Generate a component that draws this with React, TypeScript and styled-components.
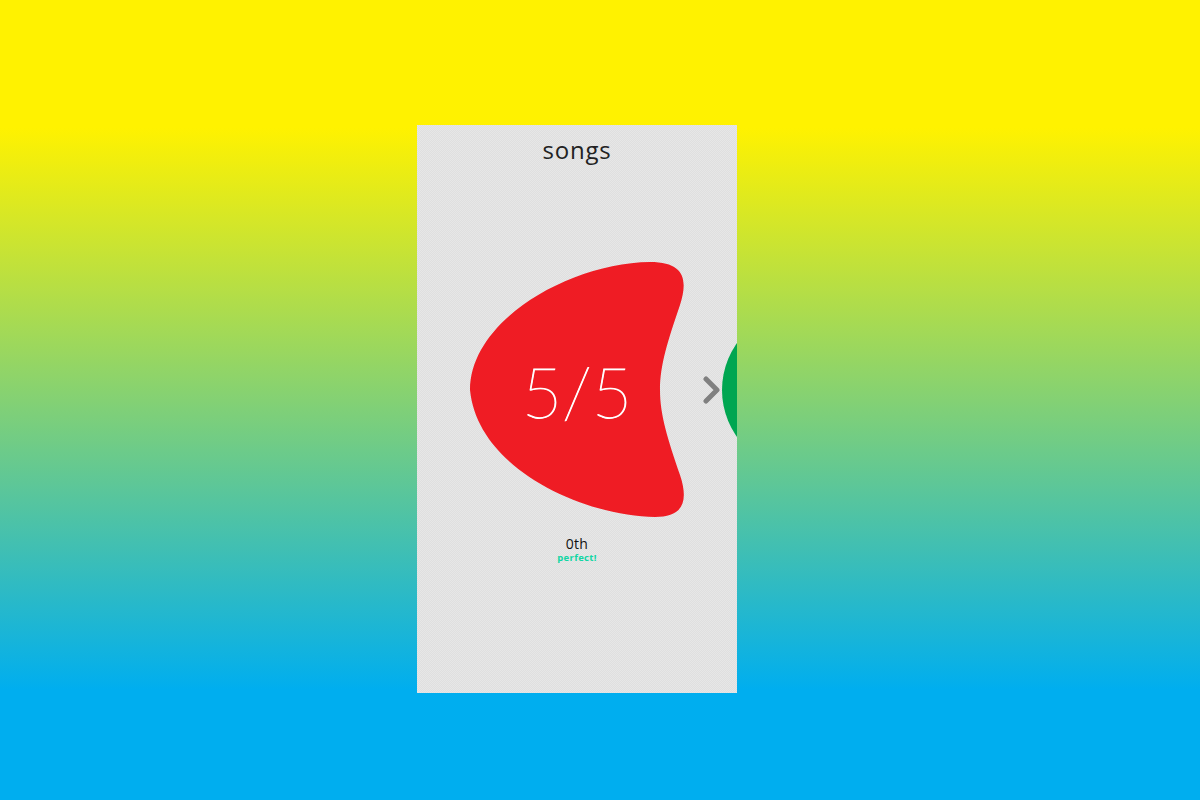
import React from "react";
import styled, { createGlobalStyle } from "styled-components";

const Global = createGlobalStyle`
  html, body { margin: 0; padding: 0; }
  body {
    min-height: 800px;
    background: linear-gradient(180deg, #fff200 0px, #fff200 128px, #00aeef 690px, #00aeef 800px);
    font-family: "Open Sans", "Noto Sans", sans-serif;
  }
`;

const Stage = styled.div`
  display: flex;
  padding: 125px 0 0 417px;
`;

const Panel = styled.section`
  width: 320px;
  height: 568px;
  overflow: hidden;
  display: flex;
  flex-direction: column;
  align-items: stretch;
  background: repeating-conic-gradient(#dfdfdf 0 25%, #e7e7e7 0 50%) 0 0 / 2px 2px;
`;

const Title = styled.h1`
  margin: 0;
  height: 50px;
  line-height: 50px;
  text-align: center;
  font-family: "Open Sans", sans-serif;
  font-weight: 400;
  font-size: 24px;
  letter-spacing: 0.8px;
  color: #222;
`;

const Track = styled.div`
  margin-top: 85px;
  height: 260px;
  display: flex;
  align-items: center;
  padding-left: 53px;
`;

const Slide = styled.div`
  position: relative;
  flex: 0 0 auto;
  width: 220px;
  height: 260px;
  display: flex;
  align-items: center;
  justify-content: center;
`;

const BlobShape = styled.svg`
  position: absolute;
  inset: 0;
`;

const Score = styled.span`
  position: relative;
  font-family: "Lato", "Open Sans", sans-serif;
  font-weight: 100;
  font-size: 70px;
  line-height: 1;
  color: #fff;
  -webkit-text-stroke: 0.9px #fff;
  margin-left: -6px;
  margin-top: 2px;
`;

const Chevron = styled.svg`
  flex: 0 0 auto;
  margin-left: 13px;
  width: 18px;
  height: 28px;
`;

const NextBall = styled.div<{ $color: string }>`
  flex: 0 0 auto;
  margin-left: 1px;
  width: 162px;
  height: 162px;
  border-radius: 50%;
  background: ${(p) => p.$color};
`;

const Stats = styled.div`
  margin-top: 15px;
  display: flex;
  flex-direction: column;
  align-items: center;
`;

const Rank = styled.div`
  font-family: "Open Sans", sans-serif;
  font-size: 14px;
  line-height: 17px;
  color: #111;
  letter-spacing: 0.3px;
`;

const Verdict = styled.div`
  font-family: "Open Sans", sans-serif;
  font-weight: 700;
  font-size: 9.5px;
  line-height: 12px;
  color: #12d6a4;
  letter-spacing: 0.3px;
`;

export default function App() {
  return (
    <>
      <Global />
      <Stage>
        <Panel>
          <Title>songs</Title>
          <Track>
            <Slide>
              <BlobShape viewBox="0 0 220 260" width="220" height="260">
                <path
                  d="M0 130 C0 60 100 3 180 2 C215 2 218 20 210 45 C198 80 190 105 190 130 C190 155 198 180 210 215 C220 245 210 257 185 257 C115 256 8 210 0 130 Z"
                  fill="#ef1c24"
                />
              </BlobShape>
              <Score>5/5</Score>
            </Slide>
            <Chevron viewBox="0 0 18 28">
              <path d="M3 3 L14 14 L3 25" fill="none" stroke="#808080" strokeWidth="5" strokeLinecap="round" strokeLinejoin="round" />
            </Chevron>
            <NextBall $color="#00a651" />
          </Track>
          <Stats>
            <Rank>0th</Rank>
            <Verdict>perfect!</Verdict>
          </Stats>
        </Panel>
      </Stage>
    </>
  );
}
